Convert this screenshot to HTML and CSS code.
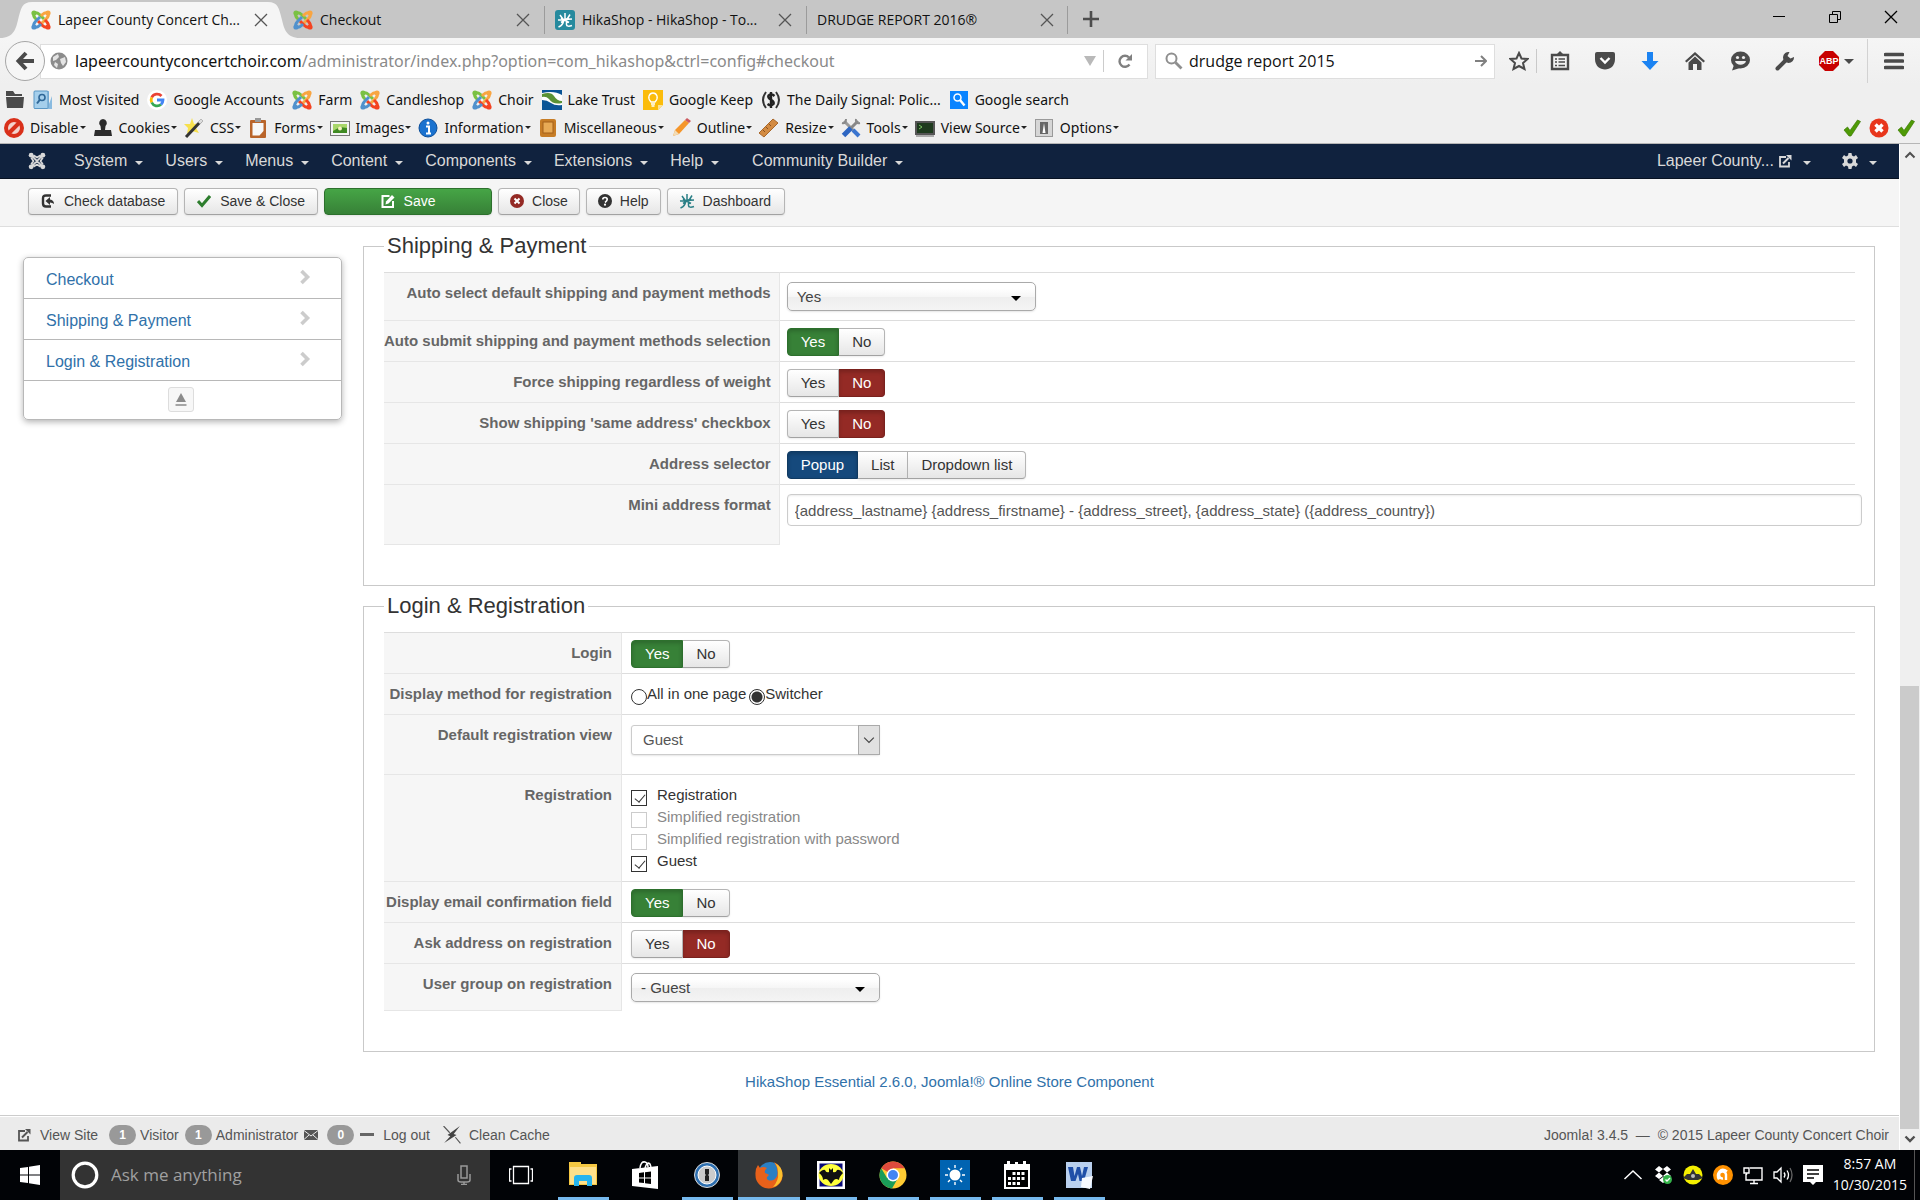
FILE: index.html
```html
<!DOCTYPE html>
<html lang="en">
<head>
<meta charset="utf-8">
<title>Lapeer County Concert Choir - Administration</title>
<link rel="stylesheet" href="styles.css">
</head>
<body>
<svg class="defs" aria-hidden="true">
  <symbol id="joomla-arm" viewBox="0 0 20 20">
    <g fill="none" stroke="currentColor" stroke-width="3"><path d="M3 3C5.500 2 7 3 8.500 4.500L13 9"/><path d="M3 3C2 5.500 3 7 4.500 8.500L6 10"/></g><circle cx="3" cy="3" r="2.600" fill="currentColor"/>
  </symbol>
  <symbol id="joomla" viewBox="0 0 20 20">
    <use href="#joomla-arm" width="20" height="20" color="#7ac143"/>
    <use href="#joomla-arm" width="20" height="20" color="#f9a541" transform="rotate(90 10 10)"/>
    <use href="#joomla-arm" width="20" height="20" color="#f44321" transform="rotate(180 10 10)"/>
    <use href="#joomla-arm" width="20" height="20" color="#5091cd" transform="rotate(270 10 10)"/>
  </symbol>
  <symbol id="joomla-mono" viewBox="0 0 20 20">
    <g fill="none" stroke="currentColor" stroke-width="2"><path d="M3.500 3.500L16.500 16.500M16.500 3.500L3.500 16.500M6 3.500L10 6L14 3.500M6 16.500L10 14L14 16.500M3.500 6L6 10L3.500 14M16.500 6L14 10L16.500 14"/></g>
    <g fill="currentColor"><circle cx="3.500" cy="3.500" r="2.700"/><circle cx="16.500" cy="3.500" r="2.700"/><circle cx="3.500" cy="16.500" r="2.700"/><circle cx="16.500" cy="16.500" r="2.700"/></g>
  </symbol>
  <symbol id="x" viewBox="0 0 14 14"><path d="M1 1L13 13M13 1L1 13" stroke="currentColor" stroke-width="1.300" fill="none"/></symbol>
  <symbol id="external" viewBox="0 0 14 14"><path d="M8 3H2V12.500H11V8" fill="none" stroke="currentColor" stroke-width="1.800"/><path d="M5 9.500L10.500 4" stroke="currentColor" stroke-width="2"/><path d="M8 1H13.500V6.500Z" fill="currentColor"/></symbol>
  <symbol id="hika" viewBox="0 0 16 16"><path d="M8 1V8M3 3L5.500 6.500M13 2.500L10.500 6.500M1 8L15 7M6.500 8C6.500 12 4 14 1.500 15M9.500 8V12.500C9.500 14.500 12 14.500 15 13.500M4 10.500L12 5.500M4 6L12 10.500" fill="none" stroke="currentColor" stroke-width="1.500"/></symbol>
  <symbol id="tick" viewBox="0 0 18 18"><path d="M1 11L4.500 8L7 11.500L14.500 1L17.500 2.500L8 17H6Z" fill="#4e9a06" stroke="#3c7a05" stroke-width=".700"/></symbol>
  <symbol id="chevron" viewBox="0 0 12 16"><path d="M2.500 2L8.500 8L2.500 14" fill="none" stroke="currentColor" stroke-width="3.600"/></symbol>
</svg>

<header class="browser">
  <div class="tabs">
    <div class="tab active">
      <svg class="tab-shape" viewBox="0 0 300 36" preserveAspectRatio="none"><path d="M0 36C14 36 16 26 18 18C21 6 22 0 32 0H268C278 0 279 6 282 18C284 26 286 36 300 36Z" fill="#f5f5f5"/></svg>
      <svg class="i20"><use href="#joomla"/></svg><span class="tab-title">Lapeer County Concert Ch...</span><button class="plain" aria-label="Close tab"><svg class="i14"><use href="#x"/></svg></button>
    </div>
    <div class="tab"><svg class="i20"><use href="#joomla"/></svg><span class="tab-title">Checkout</span><button class="plain" aria-label="Close tab"><svg class="i14"><use href="#x"/></svg></button></div>
    <div class="tab ruled"><svg class="i20 hika-tile" viewBox="0 0 20 20"><rect width="20" height="20" rx="3" fill="#268a9e"/><use href="#hika" x="2" y="2" width="16" height="16"/></svg><span class="tab-title">HikaShop - HikaShop - To...</span><button class="plain" aria-label="Close tab"><svg class="i14"><use href="#x"/></svg></button></div>
    <div class="tab ruled"><span class="tab-title">DRUDGE REPORT 2016®</span><button class="plain" aria-label="Close tab"><svg class="i14"><use href="#x"/></svg></button></div>
    <button class="plain new-tab" aria-label="New tab"><svg class="i16" viewBox="0 0 16 16"><path d="M8 0V16M0 8H16" stroke="#4d4d4d" stroke-width="2.600"/></svg></button>
    <div class="window-buttons">
      <button class="plain" aria-label="Minimize"><svg class="i14" viewBox="0 0 14 14"><path d="M1 6.500H13" stroke="#000"/></svg></button>
      <button class="plain" aria-label="Restore"><svg class="i14" viewBox="0 0 14 14"><path d="M1.500 4.500H9.500V12.500H1.500ZM4.500 4V1.500H12.500V9.500H10" fill="none" stroke="#000"/></svg></button>
      <button class="plain" aria-label="Close"><svg class="i14"><use href="#x"/></svg></button>
    </div>
  </div>

  <div class="navigation">
    <button class="back" aria-label="Back"><svg class="i20" viewBox="0 0 20 20"><path d="M11 2L3.500 10L11 18M4 10H19" fill="none" stroke="#4a4a4a" stroke-width="4"/></svg></button>
    <div class="address">
      <svg class="i18" viewBox="0 0 18 18"><circle cx="9" cy="9" r="8.500" fill="#8c8c8c"/><path d="M3 5L8 2L9 5L6 8L3 9ZM10 7L15 5L16 10L13 14L11 11ZM5 10L8 12L7 16L4 13Z" fill="#e4e4e4"/></svg>
      <span class="url"><b>lapeercountyconcertchoir.com</b>/administrator/index.php?option=com_hikashop&amp;ctrl=config#checkout</span>
      <svg class="i12" viewBox="0 0 12 12"><path d="M0 1H12L6 11Z" fill="#b9b9b9"/></svg>
      <button class="plain reload" aria-label="Reload"><svg class="i16" viewBox="0 0 16 16"><path d="M12.500 11.500A5.500 5.500 0 1 1 12 4.500" fill="none" stroke="#808080" stroke-width="2.400"/><path d="M15 1V7.500H8.500Z" fill="#808080"/></svg></button>
    </div>
    <form class="search">
      <svg class="i18" viewBox="0 0 18 18"><circle cx="6.500" cy="6.500" r="5" fill="none" stroke="#8f8f8f" stroke-width="2"/><path d="M10.500 10.500L16.500 16.500" stroke="#8f8f8f" stroke-width="2.800"/></svg>
      <input type="text" aria-label="Search" value="drudge report 2015">
      <button type="button" class="plain" aria-label="Go"><svg class="i12" viewBox="0 0 12 12"><path d="M0 6H10M6 1L11 6L6 11" fill="none" stroke="#808080" stroke-width="2"/></svg></button>
    </form>
    <div class="tools">
      <button class="plain star" aria-label="Bookmark"><svg class="i20" viewBox="0 0 20 20"><path d="M10 2L12.500 7.500L18.500 8L14 12L15.500 18L10 15L4.500 18L6 12L1.500 8L7.500 7.500Z" fill="none" stroke="#4a4a4a" stroke-width="2"/></svg></button>
      <button class="plain" aria-label="Bookmarks list"><svg class="i20" viewBox="0 0 20 20"><path d="M2 4H18V18H2Z" fill="none" stroke="#4a4a4a" stroke-width="2.400"/><path d="M6 4L10 0L14 4Z" fill="#4a4a4a"/><path d="M5 8H7M8.500 8H15M5 11H7M8.500 11H15M5 14.500H7M8.500 14.500H15" stroke="#4a4a4a" stroke-width="1.600"/></svg></button>
      <button class="plain" aria-label="Pocket"><svg class="i20" viewBox="0 0 20 20"><path d="M2 1H18Q20 1 20 3V8C20 22 0 22 0 8V3Q0 1 2 1Z" fill="#4a4a4a"/><path d="M5.500 7L10 11.500L14.500 7" fill="none" stroke="#fff" stroke-width="2.400"/></svg></button>
      <button class="plain" aria-label="Downloads"><svg class="i20" viewBox="0 0 20 20"><path d="M7 1H13V10H18.500L10 19L1.500 10H7Z" fill="#1b83f2"/></svg></button>
      <button class="plain" aria-label="Home"><svg class="i20" viewBox="0 0 20 20"><path d="M0 10L10 1L20 10L18.500 11.500L10 4L1.500 11.500Z" fill="#4a4a4a"/><path d="M3.500 11.500L10 5.500L16.500 11.500V19H12V13H8V19H3.500Z" fill="#4a4a4a"/></svg></button>
      <button class="plain" aria-label="Chat"><svg class="i20" viewBox="0 0 20 20"><ellipse cx="10.500" cy="9" rx="9.500" ry="8.500" fill="#4a4a4a"/><path d="M4 14L2 19.500L10 17Z" fill="#4a4a4a"/><circle cx="7.500" cy="6.500" r="1.600" fill="#eee"/><circle cx="13.500" cy="6.500" r="1.600" fill="#eee"/><path d="M5 10H16C15 15 6 15 5 10Z" fill="#eee"/></svg></button>
      <button class="plain" aria-label="Developer tools"><svg class="i20" viewBox="0 0 20 20"><path d="M2.500 17.500L12 8" stroke="#4a4a4a" stroke-width="4" stroke-linecap="round"/><path d="M14.500 1A5.500 5.500 0 1 0 19 6L15.500 7.500L12.500 5Z" fill="#4a4a4a"/></svg></button>
      <button class="plain abp" aria-label="Adblock Plus"><svg class="i20" viewBox="0 0 20 20"><path d="M6 0H14L20 6V14L14 20H6L0 14V6Z" fill="#c80000"/><text x="10" y="13" font-size="9" font-weight="bold" text-anchor="middle" fill="#fff" class="arial">ABP</text></svg><span class="caret"></span></button>
      <button class="plain burger" aria-label="Menu"><svg class="i20" viewBox="0 0 20 20"><path d="M1.500 3.500H18.500M1.500 10H18.500M1.500 16.500H18.500" stroke="#4a4a4a" stroke-width="3.600" stroke-linecap="round"/></svg></button>
    </div>
  </div>

  <nav class="bookmarks" aria-label="Bookmarks">
    <svg class="i20" viewBox="0 0 20 20"><path d="M1 1H8L10 4H17V6H1ZM1 7H19L18 18H2Z" fill="#4a4a4a"/></svg>
    <a href="#"><svg class="i20" viewBox="0 0 20 20"><path d="M1 1H16V14L19 6V19H1Z" fill="#8abbe0"/><rect x="1" y="1" width="14" height="17.500" rx="1" fill="#a5cfec" stroke="#5b97c4"/><circle cx="9" cy="7.500" r="3" fill="none" stroke="#2f6797" stroke-width="1.600"/><path d="M7 9.500L4 13.500" stroke="#2f6797" stroke-width="2"/></svg>Most Visited</a>
    <a href="#"><svg class="i20" viewBox="0 0 20 20"><circle cx="10" cy="10" r="10" fill="#fff"/><g fill="none" stroke-width="2.800"><path d="M14.500 6A6 6 0 0 0 4.700 7.500" stroke="#ea4335"/><path d="M4.700 7.500A6 6 0 0 0 4.700 12.500" stroke="#fbbc05"/><path d="M4.700 12.500A6 6 0 0 0 14 14.500" stroke="#34a853"/><path d="M14 14.500Q16 12.500 16 10H10" stroke="#4285f4"/></g></svg>Google Accounts</a>
    <a href="#"><svg class="i20"><use href="#joomla"/></svg>Farm</a>
    <a href="#"><svg class="i20"><use href="#joomla"/></svg>Candleshop</a>
    <a href="#"><svg class="i20"><use href="#joomla"/></svg>Choir</a>
    <a href="#"><svg class="i20" viewBox="0 0 20 20"><rect width="20" height="20" fill="#fff"/><path d="M0 0H20V5Q12 0 0 3Z" fill="#0b5596"/><path d="M0 4Q9 1 12 6T20 11V13Q11 15 7 9Q4 6 0 7Z" fill="#5a9235"/><path d="M0 10Q5 10 9 13T20 15V20H0Z" fill="#0b5596"/></svg>Lake Trust</a>
    <a href="#"><svg class="i20" viewBox="0 0 20 20"><path d="M0 0H20V15L15 20H0Z" fill="#fbbc0b"/><path d="M15 20V15H20Z" fill="#fde293"/><path d="M8 12Q5 9 6 6T10 3T14 6T12 12ZM8 14H12M8.500 16H11.500" fill="none" stroke="#fff" stroke-width="1.300"/></svg>Google Keep</a>
    <a href="#"><svg class="i20" viewBox="0 0 20 20"><path d="M5 2Q-1 10 5 18M15 2Q21 10 15 18" fill="none" stroke="#333" stroke-width="2"/><path d="M13.500 6Q10 3 7.500 5.500C5.500 10 14.500 9.500 12.500 14Q10 16.500 6.500 14M10 2V18" fill="none" stroke="#222" stroke-width="2.400"/></svg><span>The Daily Signal: Polic...</span></a>
    <a href="#"><svg class="i20" viewBox="0 0 20 20"><rect x="1" y="1" width="18" height="18" fill="#0a84ff"/><circle cx="8.500" cy="7.500" r="3.500" fill="none" stroke="#fff" stroke-width="1.500"/><path d="M11 10L15.500 15.500" stroke="#fff" stroke-width="2.400"/></svg>Google search</a>
  </nav>

  <div class="devbar">
    <button class="plain dev"><svg class="i20" viewBox="0 0 20 20"><circle cx="10" cy="10" r="8" fill="#f3d2cc" stroke="#d9301a" stroke-width="4"/><path d="M4.500 15.500L15.500 4.500" stroke="#d9301a" stroke-width="4"/></svg>Disable</button>
    <button class="plain dev"><svg class="i20" viewBox="0 0 20 20"><path d="M10 1A4 4 0 0 1 12.500 8L12 12H18L19 18H1L2 12H8L7.500 8A4 4 0 0 1 10 1Z" fill="#2b2b2b"/></svg>Cookies</button>
    <button class="plain dev"><svg class="i20" viewBox="0 0 20 20"><path d="M8 0L10 6L16 5L12 10L15 15L8 13L3 16L4 10L0 6L6 6Z" fill="#f7e04d"/><path d="M2 19L18 2" stroke="#333" stroke-width="3"/><path d="M15 5L18 2" stroke="#ddd" stroke-width="3"/></svg>CSS</button>
    <button class="plain dev"><svg class="i20" viewBox="0 0 20 20"><rect x="2" y="2" width="16" height="18" rx="1" fill="#b9642a"/><path d="M4.500 5H15.500V13L11.500 17.500H4.500Z" fill="#f7f7f7"/><path d="M7 0H13V4H7Z" fill="#999"/></svg>Forms</button>
    <button class="plain dev"><svg class="i20" viewBox="0 0 20 20"><rect x=".500" y="3.500" width="19" height="14" fill="#f4f4f4" stroke="#777"/><path d="M3 6H17V15H3Z" fill="#3f8a23"/><path d="M3 6H17V10L10 9L3 13Z" fill="#a9d66a"/><circle cx="10" cy="10.500" r="2" fill="#f7f3c0"/></svg>Images</button>
    <button class="plain dev"><svg class="i20" viewBox="0 0 20 20"><circle cx="10" cy="10" r="9" fill="#1a72cf" stroke="#0d4f9a"/><path d="M8 8.500H11V15M8 15.500H13" fill="none" stroke="#fff" stroke-width="2"/><circle cx="10" cy="5" r="1.500" fill="#fff"/></svg>Information</button>
    <button class="plain dev"><svg class="i20" viewBox="0 0 20 20"><rect x="2" y="1" width="16" height="18" rx="2" fill="#c77d26"/><rect x="5" y="4" width="10" height="11" fill="#e8aa55" stroke="#a3611a"/></svg>Miscellaneous</button>
    <button class="plain dev"><svg class="i20" viewBox="0 0 20 20"><path d="M2 18L4 12L14 2L18 5L8 16Z" fill="#f5962b"/><path d="M14 2L16 0L20 3L18 5Z" fill="#cc5a5f"/><path d="M2 18L4 12L8 16Z" fill="#f2dcb5"/></svg>Outline</button>
    <button class="plain dev"><svg class="i20" viewBox="0 0 20 20"><path d="M0 15L14 1L19 5L5 19Z" fill="#d38b42" stroke="#a8672a"/><path d="M4 12L6 14M7 9L9 11M10 6L12 8" stroke="#8a5220"/></svg>Resize</button>
    <button class="plain dev"><svg class="i20" viewBox="0 0 20 20"><path d="M3 3L16 16" stroke="#9a9a9a" stroke-width="3"/><path d="M17 3L10 10" stroke="#888" stroke-width="3"/><path d="M10 10L2.500 17.500" stroke="#2d66c2" stroke-width="5"/><path d="M12 12L18 18" stroke="#3b75cf" stroke-width="4"/><path d="M1 5Q5 6 5 1M15 1Q14 6 19 5" fill="none" stroke="#8a8a8a" stroke-width="2"/></svg>Tools</button>
    <button class="plain dev"><svg class="i20" viewBox="0 0 20 20"><rect x="1" y="4" width="18" height="12" fill="#1e3a1e" stroke="#555" stroke-width="2"/><path d="M4 7L7 9L4 11" fill="none" stroke="#79c060"/><path d="M1 18H19" stroke="#aaa" stroke-width="2"/></svg>View Source</button>
    <button class="plain dev"><svg class="i20" viewBox="0 0 20 20"><rect x="1.500" y="1.500" width="17" height="17" fill="#d6d6d6" stroke="#9a9a9a"/><rect x="6" y="4" width="8" height="12" fill="#666"/><path d="M8.500 15L10 5L11.500 15" fill="#fff"/></svg>Options</button>
    <span class="status">
      <svg class="i18"><use href="#tick"/></svg>
      <svg class="i20" viewBox="0 0 20 20"><circle cx="10" cy="10" r="9.500" fill="#e8361c"/><path d="M6.500 6.500L13.500 13.500M13.500 6.500L6.500 13.500" stroke="#fff" stroke-width="3.400"/></svg>
      <svg class="i18"><use href="#tick"/></svg>
    </span>
  </div>
</header>

<div class="viewport">
  <div class="site">
    <nav class="navbar" aria-label="Main menu">
      <a href="#" class="brand" aria-label="Joomla"><svg class="i18"><use href="#joomla-mono"/></svg></a>
      <a href="#" class="menu">System</a>
      <a href="#" class="menu">Users</a>
      <a href="#" class="menu">Menus</a>
      <a href="#" class="menu">Content</a>
      <a href="#" class="menu">Components</a>
      <a href="#" class="menu">Extensions</a>
      <a href="#" class="menu">Help</a>
      <a href="#" class="menu extra">Community Builder</a>
      <span class="navbar-right">
        <a href="#" class="menu">Lapeer County...<svg class="i14"><use href="#external"/></svg></a>
        <a href="#" class="menu" aria-label="Settings"><svg class="i16" viewBox="0 0 16 16"><path d="M6.500 0H9.500L10 2.500L12 3.500L14 2L16 5L14 6.500V9.500L16 11L14 14L12 12.500L10 13.500L9.500 16H6.500L6 13.500L4 12.500L2 14L0 11L2 9.500V6.500L0 5L2 2L4 3.500L6 2.500Z" fill="#d9d9d9"/><circle cx="8" cy="8" r="2.600" fill="#10223e"/></svg></a>
      </span>
    </nav>

    <div class="toolbar">
      <button class="btn"><svg class="i14" viewBox="0 0 14 14"><path d="M10 1.500H5Q2 1.500 2 4.500V9.500Q2 12.500 5 12.500H10" fill="none" stroke="#333" stroke-width="2.400"/><path d="M4.500 7L9 3V5.500Q13 6 13 10Q11.500 8.500 9 8.500V11Z" fill="#333"/></svg>Check database</button>
      <button class="btn"><svg class="i14" viewBox="0 0 14 14"><path d="M1 7L5 11.500L13 2" fill="none" stroke="#2d7d2d" stroke-width="3"/></svg>Save &amp; Close</button>
      <button class="btn save"><svg class="i14" viewBox="0 0 14 14"><path d="M8.500 2H1.500V13H12V7" fill="none" stroke="#fff" stroke-width="2"/><path d="M4.500 10.500L5 7.500L11 1L13.500 3.500L7.500 9.500Z" fill="#fff"/></svg>Save</button>
      <button class="btn tight"><svg class="i14" viewBox="0 0 14 14"><circle cx="7" cy="7" r="7" fill="#942a25"/><path d="M4.500 4.500L9.500 9.500M9.500 4.500L4.500 9.500" stroke="#fff" stroke-width="2"/></svg>Close</button>
      <button class="btn tight"><svg class="i14" viewBox="0 0 14 14"><circle cx="7" cy="7" r="7" fill="#333"/><path d="M4.800 5.500Q4.800 3.500 7 3.500T9.200 5.300T7 8.500" fill="none" stroke="#fff" stroke-width="1.700"/><circle cx="7" cy="10.700" r="1.100" fill="#fff"/></svg>Help</button>
      <button class="btn dash"><svg class="i16"><use href="#hika"/></svg>Dashboard</button>
    </div>

    <main class="content">
      <nav class="side" aria-label="Sections">
        <a href="#">Checkout<svg class="chev"><use href="#chevron"/></svg></a>
        <a href="#">Shipping &amp; Payment<svg class="chev"><use href="#chevron"/></svg></a>
        <a href="#">Login &amp; Registration<svg class="chev"><use href="#chevron"/></svg></a>
        <div class="side-foot"><button class="to-top" aria-label="Back to top"><svg class="i14" viewBox="0 0 14 14"><path d="M7 0L12 9H2Z" fill="#8b8b8b"/><path d="M1.500 12H12.500" stroke="#a5a5a5" stroke-width="2"/></svg></button></div>
      </nav>

      <form class="panels">
        <fieldset>
          <legend>Shipping &amp; Payment</legend>
          <table class="options wide">
            <tr><th scope="row"><label for="autoselect">Auto select default shipping and payment methods</label></th><td><span class="chosen"><select id="autoselect"><option>Yes</option></select></span></td></tr>
            <tr><th scope="row">Auto submit shipping and payment methods selection</th><td><div class="group"><label class="yes"><input type="radio" name="autosubmit" checked>Yes</label><label class="no"><input type="radio" name="autosubmit">No</label></div></td></tr>
            <tr><th scope="row">Force shipping regardless of weight</th><td><div class="group"><label class="yes"><input type="radio" name="force">Yes</label><label class="no"><input type="radio" name="force" checked>No</label></div></td></tr>
            <tr><th scope="row">Show shipping 'same address' checkbox</th><td><div class="group"><label class="yes"><input type="radio" name="same">Yes</label><label class="no"><input type="radio" name="same" checked>No</label></div></td></tr>
            <tr><th scope="row">Address selector</th><td><div class="group"><label class="pick"><input type="radio" name="selector" checked>Popup</label><label class="pick"><input type="radio" name="selector">List</label><label class="pick"><input type="radio" name="selector">Dropdown list</label></div></td></tr>
            <tr><th scope="row"><label for="mini">Mini address format</label></th><td><input class="text" id="mini" type="text" value="{address_lastname} {address_firstname} - {address_street}, {address_state} ({address_country})"></td></tr>
          </table>
        </fieldset>

        <fieldset>
          <legend>Login &amp; Registration</legend>
          <table class="options narrow">
            <tr><th scope="row">Login</th><td><div class="group"><label class="yes"><input type="radio" name="login" checked>Yes</label><label class="no"><input type="radio" name="login">No</label></div></td></tr>
            <tr><th scope="row">Display method for registration</th><td><div class="radios"><label><input type="radio" name="method">All in one page</label><label><input type="radio" name="method" checked>Switcher</label></div></td></tr>
            <tr><th scope="row"><label for="view">Default registration view</label></th><td><span class="native"><select id="view"><option>Guest</option></select><svg class="drop" viewBox="0 0 20 29"><path d="M5 12L10 17L15 12" fill="none" stroke="#444" stroke-width="1.200"/></svg></span></td></tr>
            <tr><th scope="row">Registration</th><td><div class="checks"><label><input type="checkbox" checked>Registration</label><label class="off"><input type="checkbox" disabled>Simplified registration</label><label class="off"><input type="checkbox" disabled>Simplified registration with password</label><label><input type="checkbox" checked>Guest</label></div></td></tr>
            <tr><th scope="row">Display email confirmation field</th><td><div class="group"><label class="yes"><input type="radio" name="email" checked>Yes</label><label class="no"><input type="radio" name="email">No</label></div></td></tr>
            <tr><th scope="row">Ask address on registration</th><td><div class="group"><label class="yes"><input type="radio" name="ask">Yes</label><label class="no"><input type="radio" name="ask" checked>No</label></div></td></tr>
            <tr><th scope="row"><label for="usergroup">User group on registration</label></th><td><span class="chosen"><select id="usergroup"><option>- Guest</option></select></span></td></tr>
          </table>
        </fieldset>
      </form>
    </main>
    <p class="credit"><a href="#">HikaShop Essential 2.6.0, Joomla!® Online Store Component</a></p>

    <footer class="statusbar">
      <a href="#" class="view-site"><svg class="i14"><use href="#external"/></svg>View Site</a>
      <span class="count"><span class="badge">1</span>Visitor</span>
      <span class="count"><span class="badge">1</span>Administrator</span>
      <a href="#" class="mail" aria-label="Messages"><svg class="i14" viewBox="0 0 14 14"><path d="M0 2H14V12H0Z" fill="#555"/><path d="M0 2.500L7 8L14 2.500M0 11.500L5 7M14 11.500L9 7" fill="none" stroke="#ebebeb"/></svg><span class="badge">0</span></a>
      <a href="#" class="logout"><svg class="i14" viewBox="0 0 14 14"><path d="M0 6.500H14" stroke="#666" stroke-width="3"/></svg>Log out</a>
      <a href="#" class="clean"><svg class="i18" viewBox="0 0 16 16"><path d="M15 0L9.500 7L12 8L1 15L6.500 9L4 8Z" fill="#444"/><path d="M.500 0L6 6M11 10L15.500 15.500" stroke="#555"/></svg>Clean Cache</a>
      <span class="copyright">Joomla! 3.4.5 &nbsp;—&nbsp; © 2015 Lapeer County Concert Choir</span>
    </footer>
  </div>
  <div class="scrollbar" aria-hidden="true">
    <svg class="i12" viewBox="0 0 12 12"><path d="M1.500 8.500L6 4L10.500 8.500" fill="none" stroke="#505050" stroke-width="2"/></svg>
    <div class="track"><div class="thumb"></div></div>
    <svg class="i12" viewBox="0 0 12 12"><path d="M1.500 3.500L6 8L10.500 3.500" fill="none" stroke="#505050" stroke-width="2.400"/></svg>
  </div>
</div>

<div class="taskbar">
  <button class="plain start" aria-label="Start"><svg class="i20" viewBox="0 0 20 20"><path d="M0 3L8 2V9.500H0ZM9 1.800L20 0V9.500H9ZM0 10.500H8V18L0 17ZM9 10.500H20V20L9 18.200Z" fill="#fff"/></svg></button>
  <label class="cortana"><svg class="i28" viewBox="0 0 28 28"><circle cx="14" cy="14" r="11.800" fill="none" stroke="#fff" stroke-width="3.200"/></svg><input type="text" placeholder="Ask me anything" aria-label="Ask me anything"><svg class="i20" viewBox="0 0 20 20"><path d="M7 1H13V13H7ZM4 9V15Q4 17 7 17H13Q16 17 16 15V9M10 17V20M7 19.500H13" fill="none" stroke="#999" stroke-width="1.500"/></svg></label>
  <button class="plain app" aria-label="Task view"><svg class="i24" viewBox="0 0 24 24"><path d="M4.500 3.500H19.500V20.500H4.500ZM2.500 6H.500V18H2.500M21.500 6H23.500V18H21.500" fill="none" stroke="#fff" stroke-width="1.300"/></svg></button>
  <button class="plain app open" aria-label="File Explorer"><svg class="i28" viewBox="0 0 28 28"><path d="M0 1H12V3H28V24H0Z" fill="#f5c842"/><path d="M1 6H27V23H1Z" fill="#ffe08a"/><path d="M5 25V17Q5 14 8 14H20Q23 14 23 17V25H18V20H10V25Z" fill="#26b4ee"/></svg></button>
  <button class="plain app" aria-label="Store"><svg class="i28" viewBox="0 0 28 28"><path d="M9 7Q10 0 14 1Q17 2 17 6M14 7Q16 0 19 3L20 6" fill="none" stroke="#fff" stroke-width="1.500"/><path d="M1 8L27 5V28L1 25Z" fill="#fff"/><path d="M8 12L13 11.300V16.500H8ZM14 11.200L20 10.500V16.500H14ZM8 17.500H13V22L8 21.500ZM14 17.500H20V23L14 22.200Z" fill="#000"/></svg></button>
  <button class="plain app open" aria-label="1Password"><svg class="i28" viewBox="0 0 28 28"><circle cx="14" cy="14" r="12.500" fill="#2d6fb0" stroke="#ddd"/><circle cx="14" cy="14" r="9" fill="#ccc" stroke="#fff"/><path d="M12 8H16V13L15 14L16 15V20H12V15L13 14L12 13Z" fill="#222"/></svg></button>
  <button class="plain app open current" aria-label="Firefox"><svg class="i28" viewBox="0 0 28 28"><circle cx="15" cy="13" r="12" fill="#2a7fc4"/><path d="M19 1Q28 6 27.500 15A13.500 13 0 0 1 .500 14Q0 8 3 4L5 7Q8 5 12 7Q9 9 10 12Q13 13 14 14Q10 17 13 19Q19 21 22 15Q24 8 19 1Z" fill="#e8611a"/><path d="M20 2Q28 6 27.500 15Q26 24 18 26Q24 19 23 12Q23 6 20 2Z" fill="#fbc02d"/></svg></button>
  <button class="plain app open" aria-label="The Bat"><svg class="i28" viewBox="0 0 28 28"><rect width="28" height="28" fill="#fff"/><rect x="2.500" y="2.500" width="23" height="23" fill="#0a0a78"/><ellipse cx="14" cy="14" rx="12.500" ry="11" fill="#ffff3c"/><path d="M2 12Q6 8 8 9Q9 12 12 11L12 7L14 9L16 7V11Q19 12 20 9Q23 8 26 12Q22 16 22 19Q19 17 17 19L14 23L11 19Q9 17 6 19Q6 15 2 12Z" fill="#111"/></svg></button>
  <button class="plain app open" aria-label="Chrome"><svg class="i28" viewBox="0 0 28 28"><circle cx="14" cy="14" r="13.500" fill="#fc3"/><path d="M14 14L2.300 7.200A13.500 13.500 0 0 1 25.700 7.200H14Z" fill="#de4a3c"/><path d="M2.300 7.200A13.500 13.500 0 0 0 13 27.500L19 17L14 14L8 17Z" fill="#1a9d58"/><circle cx="14" cy="14" r="6.500" fill="#fff"/><circle cx="14" cy="14" r="5" fill="#4285f4"/></svg></button>
  <button class="plain app open" aria-label="Weather"><svg class="i30" viewBox="0 0 30 30"><rect width="30" height="30" fill="#0063b1"/><circle cx="15" cy="15" r="5.500" fill="#fff"/><path d="M15 5V8M15 22V25M5 15H8M22 15H25M8 8L10 10M20 20L22 22M22 8L20 10M8 22L10 20" stroke="#fff" stroke-width="1.400"/></svg></button>
  <button class="plain app open" aria-label="Calendar"><svg class="i28" viewBox="0 0 28 28"><path d="M1 3H4V0H7V3H12V1H15V3H20V0H23V3H27V28H1Z" fill="#fff"/><path d="M3 9H25V26H3Z" fill="#000"/><path d="M9.500 12.500H22M5 17.500H22M5 22.500H17" stroke="#fff" stroke-width="3" stroke-dasharray="3 1.500"/></svg></button>
  <button class="plain app open" aria-label="Word"><svg class="i28" viewBox="0 0 28 28"><path d="M1 1H27V27H1Z" fill="#c5d9f1"/><path d="M1 1H27V20L18 27H1Z" fill="#b9d0ee"/><path d="M3 6H8L9.500 15L12 6H15L17 15L19 6H23L19 20H14.500L13 13L10.500 20H6Z" fill="#1f4fa8"/><path d="M17 17L28 15L25 28L16 26Z" fill="#f7faff"/></svg></button>
  <div class="tray">
    <svg class="i20" viewBox="0 0 20 20"><path d="M1.500 14L10 6L18.500 14" fill="none" stroke="#fff" stroke-width="1.500"/></svg>
    <svg class="i20" viewBox="0 0 20 20"><path d="M6 1L10 4L14 1L18 4.500L14 7.500L18 11L14 14L10 11L6 14L2 11L6 7.500L2 4.500ZM6 15L10 12L14 15L10 18Z" fill="#fff"/><path d="M10 4L14 7.500L10 11L6 7.500Z" fill="#000"/><circle cx="14.500" cy="14.500" r="4.500" fill="#35b44a"/><path d="M12.500 14.500L14 16L17 13" fill="none" stroke="#fff" stroke-width="1.400"/></svg>
    <svg class="i20" viewBox="0 0 20 20"><circle cx="10" cy="10" r="9.500" fill="#f5f000"/><path d="M0 13L4 9H7L10 4L13 9H16L20 13L15 15H5Z" fill="#333"/><circle cx="10" cy="11" r="2" fill="#bbb"/></svg>
    <svg class="i20" viewBox="0 0 20 20"><circle cx="10" cy="10" r="10" fill="#ff9100"/><path d="M13 15V9.500A3.500 3.500 0 1 0 10 13.500M6 14.500Q3.500 10 6.500 6.500T14 6.500" fill="none" stroke="#fff" stroke-width="2.400"/></svg>
    <svg class="i20" viewBox="0 0 20 20"><path d="M3 9V15H19V3H7M11 15V18M7 18.500H15M1 3H6V8H1ZM3.500 8V10" fill="none" stroke="#fff" stroke-width="1.400"/></svg>
    <svg class="i20" viewBox="0 0 20 20"><path d="M1 7H4L8 3V17L4 13H1Z" fill="none" stroke="#fff" stroke-width="1.300"/><path d="M11 7.500Q13 10 11 12.500M14 5.500Q17 10 14 14.500" fill="none" stroke="#fff" stroke-width="1.300"/><path d="M17 3Q21 10 17 17" fill="none" stroke="#666" stroke-width="1.300"/></svg>
    <svg class="i20" viewBox="0 0 20 20"><path d="M0 0H20V17H13L10 20L7 17H0Z" fill="#fff"/><path d="M4 5H16M4 9H16M4 13H11" stroke="#000" stroke-width="1.400"/></svg>
    <time class="clock"><span>8:57 AM</span><span>10/30/2015</span></time>
  </div>
</div>
</body>
</html>
```
FILE: styles.css
```css
* { box-sizing: border-box; }

body {
  margin: 0;
  min-height: 100vh;
  display: flex;
  flex-direction: column;
  background: #fff;
  color: #333;
  font: 15px/20px "Liberation Sans", Arial, sans-serif;
}

a { color: #3071a9; text-decoration: none; }
svg { display: block; flex: none; }
.defs { position: absolute; width: 0; height: 0; }
.i12 { width: 12px; height: 12px; }
.i14 { width: 14px; height: 14px; }
.i16 { width: 16px; height: 16px; }
.i18 { width: 18px; height: 18px; }
.i20 { width: 20px; height: 20px; }
.i24 { width: 24px; height: 24px; }
.i28 { width: 28px; height: 28px; }
.i30 { width: 30px; height: 30px; }
.arial { font-family: "Liberation Sans", Arial, sans-serif; }

.plain {
  display: flex;
  align-items: center;
  justify-content: center;
  padding: 0;
  border: 0;
  background: none;
  color: inherit;
  font: inherit;
}

/* Browser window */
.browser {
  background: #efefef;
  border-bottom: 1px solid #b6b6b6;
  color: #111;
  font: 14px/20px "Open Sans", sans-serif;
}

.tabs {
  display: flex;
  height: 38px;
  padding-left: 20px;
  background: #c6c6c6;
}
.tab {
  position: relative;
  display: flex;
  align-items: center;
  gap: 7px;
  width: 262px;
  padding: 2px 14px 0 11px;
}
.tab.ruled { background: linear-gradient(#9b9b9b, #9b9b9b) 0 6px / 1px 28px no-repeat; }
.tab:nth-child(4) { background: linear-gradient(#9b9b9b, #9b9b9b) 0 6px / 1px 28px no-repeat, linear-gradient(#9b9b9b, #9b9b9b) 100% 6px / 1px 28px no-repeat; }
.tab > * { position: relative; }
.tab > .tab-shape { position: absolute; left: -20px; bottom: 0; width: 300px; height: 36px; }
.tab-title { flex: 1; white-space: nowrap; overflow: hidden; }
.tab .plain { color: #555; }
.hika-tile { color: #fff; }
.new-tab { width: 46px; }
.window-buttons { display: flex; margin-left: auto; padding-right: 1px; color: #000; }
.window-buttons .plain { width: 56px; height: 34px; }

.navigation {
  display: flex;
  align-items: center;
  height: 46px;
  padding-left: 5px;
  background: linear-gradient(#f5f5f5, #efefef);
}
.back {
  position: relative;
  z-index: 1;
  display: flex;
  align-items: center;
  justify-content: center;
  width: 40px;
  height: 40px;
  margin-right: -5px;
  padding: 0;
  border: 1px solid #a6a6a6;
  border-radius: 50%;
  background: #f6f6f6;
}
.address, .search {
  display: flex;
  align-items: center;
  height: 35px;
  border: 1px solid #dedede;
  background: #fff;
  font-size: 16px;
}
.address { flex: 1; min-width: 0; padding: 0 14px 0 9px; gap: 7px; color: #8a8a8a; font-family: "Noto Sans", sans-serif; }
.address b { color: #111; font-weight: normal; }
.url { flex: 1; overflow: hidden; white-space: nowrap; }
.reload { height: 22px; padding-left: 13px; border-left: 1px solid #ccc; }
.search { width: 340px; margin-left: 7px; padding: 0 7px 0 9px; gap: 6px; }
.search input { flex: 1; min-width: 0; padding: 0; border: 0; outline: 0; background: none; color: #111; font: inherit; }
.tools { display: flex; align-items: center; padding-left: 7px; }
.tools .plain { width: 45px; height: 24px; }
.tools .star { width: 35px; border-right: 1px solid #c9c9c9; }
.tools .abp { width: 60px; padding-right: 2px; gap: 5px; }
.tools .burger { width: 53px; height: 44px; border-left: 1px solid #d2d2d2; }
.caret { width: 0; border: 5px solid transparent; border-top-color: #4a4a4a; border-bottom: 0; }

.bookmarks, .devbar { display: flex; align-items: center; white-space: nowrap; font-family: "Noto Sans", sans-serif; }
.bookmarks { height: 32px; padding-left: 5px; gap: 8px; }
.bookmarks a { display: flex; align-items: center; gap: 6px; color: #111; }
.devbar { height: 27px; padding: 0 5px 3px 4px; gap: 7px; }
.dev { gap: 6px; }
.dev::after { content: ""; margin: 0 0 2px -5px; border: 3px solid transparent; border-top-color: #222; border-bottom: 0; }
.status { display: flex; align-items: center; gap: 8px; margin-left: auto; }

/* Page area with its scrollbar */
.viewport { flex: 1; display: flex; }
.site { flex: 1; min-width: 0; display: flex; flex-direction: column; }
.scrollbar {
  display: flex;
  flex-direction: column;
  align-items: center;
  justify-content: space-between;
  width: 21px;
  padding: 5px 0;
  border-left: 1px solid #fff;
  background: #efefef;
}
.track { flex: 1; display: flex; align-items: flex-end; width: 100%; padding: 5px 1px 4px 0; }
.thumb { flex: 1; height: 46%; background: #cbcbcb; }

.navbar {
  display: flex;
  align-items: center;
  height: 35px;
  padding: 0 22px 0 28px;
  border-bottom: 1px solid #081222;
  background: #10223e;
  font-size: 16px;
}
.brand { color: #d9d9d9; margin-right: 28px; }
.menu { display: flex; align-items: center; color: #d9d9d9; margin-right: 22px; }
.menu::after { content: ""; margin: 4px 0 0 8px; border: 4px solid transparent; border-top-color: #d9d9d9; border-bottom: 0; }
.menu svg { margin-left: 4px; }
.menu.extra { margin-left: 11px; }
.navbar-right { display: flex; margin-left: auto; gap: 5px; }
.navbar-right .menu::after { margin-left: 11px; }
.navbar-right .menu:last-child { margin-right: 0; }

.toolbar {
  display: flex;
  align-items: center;
  gap: 6px;
  height: 48px;
  padding: 0 28px 3px;
  border-bottom: 1px solid #dedede;
  background: #f5f5f5;
}
.btn {
  display: flex;
  align-items: center;
  justify-content: center;
  gap: 9px;
  height: 27px;
  padding: 0 12px;
  border: 1px solid #b5b5b5;
  border-bottom-color: #a2a2a2;
  border-radius: 4px;
  background: linear-gradient(#fff, #e6e6e6);
  box-shadow: 0 1px 2px rgba(0, 0, 0, .08);
  color: #333;
  font: 14px/20px "Liberation Sans", Arial, sans-serif;
}
.btn.save { width: 168px; border-color: #2d702d; background: linear-gradient(#46a546, #378137); color: #fff; }
.btn.tight { padding: 0 11px; gap: 8px; }
.btn.dash { padding: 0 13px 0 11px; gap: 8px; }
.dash svg { color: #2a7f86; }

.content { display: flex; align-items: flex-start; gap: 21px; padding: 7px 24px 0 23px; }

.side {
  width: 319px;
  margin-top: 23px;
  border: 1px solid #b8b8b8;
  border-radius: 5px;
  box-shadow: 0 2px 6px rgba(0, 0, 0, .3);
  font-size: 16px;
}
.side a {
  display: flex;
  align-items: center;
  justify-content: space-between;
  height: 41px;
  padding: 3px 30px 0 22px;
  border-bottom: 1px solid #b8b8b8;
}
.chev { width: 12px; height: 16px; margin-bottom: 6px; color: #ccc; }
.side-foot { display: flex; justify-content: center; padding: 6px 4px 7px 0; }
.to-top { display: flex; align-items: center; justify-content: center; width: 26px; height: 25px; padding: 0; border: 1px solid #ddd; border-radius: 3px; background: #f7f7f7; }

.panels { flex: 1; min-width: 0; }
fieldset {
  min-width: 0;
  margin: 0 0 8px;
  padding: 14px 19px 40px 20px;
  border: 1px solid #c9c9c9;
}
legend { padding: 0 3px; font-size: 22px; line-height: 24px; color: #333; }

.options { width: 100%; border-collapse: separate; border-spacing: 0; }
.options th {
  padding: 10px 9px 10px 0;
  border: 1px solid #e6e6e6;
  border-width: 1px 1px 0 0;
  background: #f6f6f6;
  color: #666;
  text-align: right;
  vertical-align: top;
  white-space: nowrap;
}
.options td { padding: 7px 0 5px 9px; border-top: 1px solid #ddd; vertical-align: top; }
.options tr:first-child th { border-top-color: #ddd; }
.options tr:last-child th { border-bottom-width: 1px; }
.wide th { width: 394px; padding-right: 8px; }
.wide td { padding-left: 7px; }
.narrow th { width: 238px; }

.group { display: flex; height: 28px; }
.group label {
  position: relative;
  display: flex;
  align-items: center;
  padding: 0 13px;
  border: 1px solid #b5b5b5;
  border-bottom-color: #a2a2a2;
  background: linear-gradient(#fff, #e6e6e6);
  box-shadow: 0 1px 2px rgba(0, 0, 0, .08);
}
.group label + label { border-left-width: 0; }
.group label:first-child { border-radius: 4px 0 0 4px; }
.group label:last-child { border-radius: 0 4px 4px 0; }
.group input { position: absolute; inset: 0; margin: 0; opacity: 0; }
.group label:has(:checked) { color: #fff; box-shadow: inset 0 2px 4px rgba(0, 0, 0, .2); }
.group .yes:has(:checked) { border-color: #2d702d; background: #378137; }
.group .no:has(:checked) { border-color: #7a211d; background: #942a25; }
.group .pick:has(:checked) { border-color: #103a62; background: #15497c; }

.chosen, .native { position: relative; display: block; width: 249px; }
.chosen { margin: 2px 0 4px; }
.native { margin: 3px 0 14px; }
select {
  display: block;
  width: 100%;
  height: 29px;
  padding: 0 9px;
  appearance: none;
  border: 1px solid #aaa;
  border-radius: 5px;
  background: linear-gradient(#fff 20%, #f6f6f6 50%, #eee 52%, #f4f4f4);
  box-shadow: 0 1px 2px rgba(0, 0, 0, .1);
  color: #444;
  font: 15px/20px "Liberation Sans", Arial, sans-serif;
}
.chosen::after { content: ""; position: absolute; right: 15px; top: 14px; border: 5px solid transparent; border-top-color: #000; border-bottom: 0; }
.native select { height: 30px; padding: 0 11px; border-color: #ccc; border-radius: 3px; background: #fff; color: #555; }
.drop { position: absolute; right: 0; top: 0; width: 22px; height: 30px; border: 1px solid #aaa; background: #e1e1e1; pointer-events: none; }

.text {
  display: block;
  width: calc(100% + 7px);
  height: 32px;
  margin: 2px 0 14px;
  padding: 0 7px;
  border: 1px solid #ccc;
  border-radius: 4px;
  box-shadow: inset 0 1px 2px rgba(0, 0, 0, .08);
  color: #555;
  font: 15px/20px "Liberation Sans", Arial, sans-serif;
}

.radios { display: flex; gap: 3px; height: 28px; }
.radios label, .checks label { display: flex; }
.radios label { padding-top: 3px; }
.radios input, .checks input { appearance: none; flex: none; width: 16px; height: 16px; border: 1px solid #333; background: #fff; }
.radios input { margin: 5px 0 0; border-radius: 50%; }
.radios input:checked { background: radial-gradient(#333 5px, #fff 6px); }
.checks { padding: 2px 0 4px; line-height: 22px; }
.checks input { margin: 6px 10px 0 0; }
.checks input:checked::before { content: ""; display: block; width: 5px; height: 9px; margin: 1px 0 0 5px; border: solid #333; border-width: 0 1px 1px 0; rotate: 40deg; }
.checks .off { color: #888; }
.checks .off input { border-color: #ccc; }

.credit { margin: 12px 0 auto; text-align: center; }

.statusbar {
  display: flex;
  align-items: center;
  height: 35px;
  padding: 4px 10px 0 17px;
  border-top: 1px solid #ccc;
  background: #ebebeb;
  box-shadow: inset 0 1px 0 #fff;
  color: #555;
  font-size: 14px;
}
.statusbar a { color: #555; }
.statusbar > * { display: flex; align-items: center; }
.badge { width: 27px; height: 20px; border-radius: 10px; background: #999; color: #fff; font-size: 12px; font-weight: bold; text-align: center; }
.view-site { gap: 9px; margin-right: 11px; }
.count { gap: 4px; margin-right: 6px; }
.mail { gap: 9px; }
.logout { gap: 9px; margin: 0 13px 0 6px; }
.clean { gap: 8px; }
.copyright { margin-left: auto; }

/* Desktop taskbar */
.taskbar {
  display: flex;
  height: 50px;
  background: #010306;
  color: #fff;
  font: 14px/20px "Open Sans", sans-serif;
}
.start { width: 60px; }
.cortana { display: flex; align-items: center; gap: 12px; width: 430px; padding: 0 16px 0 11px; background: #333; }
.cortana input { flex: 1; min-width: 0; padding: 0; border: 0; outline: 0; background: none; color: #fff; font: 17px/24px "Open Sans", sans-serif; }
.cortana input::placeholder { color: #a0a0a0; opacity: 1; }
.app { width: 62px; }
.open { background: linear-gradient(#76b9ed, #76b9ed) 50% 100% / 51px 3px no-repeat; }
.current { background: linear-gradient(#76b9ed, #76b9ed) 50% 100% / 62px 3px no-repeat, #333638; }
.tray { display: flex; align-items: center; gap: 10px; margin-left: auto; padding-right: 5px; }
.clock { display: flex; flex-direction: column; align-items: center; height: 50px; padding: 3px 7px 0 0; border-right: 1px solid #555; line-height: 21px; }
```
